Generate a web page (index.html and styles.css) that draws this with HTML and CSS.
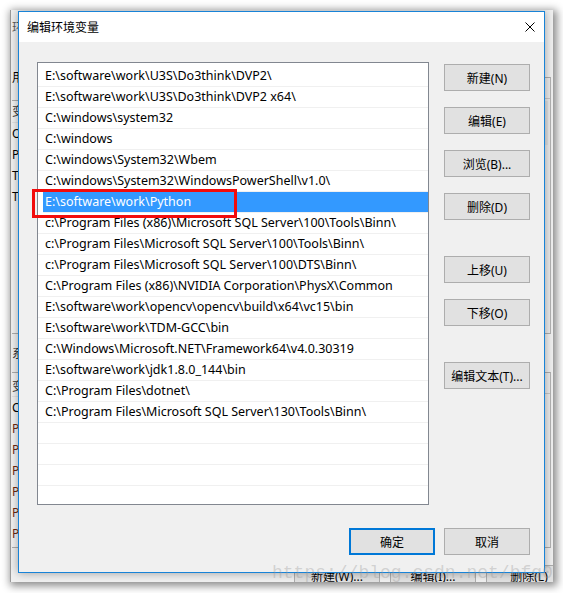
FILE: index.html
```html
<!DOCTYPE html>
<html lang="zh-CN">
<head>
<meta charset="utf-8">
<title>编辑环境变量</title>
<link rel="stylesheet" href="styles.css">
</head>
<body>
<div class="shot">
  <div class="bgwin">
    <div class="bg-main">
      <div class="bg-left">
        <div class="bg-cap">环境变量</div>
        <div class="bg-grp">用户变量(U)</div>
        <div class="bg-list bg-list1">
          <div class="bg-head">变量</div>
          <div class="bg-row">OneDrive</div>
          <div class="bg-row">Path</div>
          <div class="bg-row">TEMP</div>
          <div class="bg-row">TMP</div>
        </div>
        <div class="bg-grp2">系统变量(S)</div>
        <div class="bg-list bg-list2">
          <div class="bg-head">变量</div>
          <div class="bg-row">ComSpec</div>
          <div class="bg-row brown">Path</div>
          <div class="bg-row brown">PATHEXT</div>
          <div class="bg-row brown">PROCESSOR_ARCHITECTURE</div>
          <div class="bg-row brown">PROCESSOR_IDENTIFIER</div>
          <div class="bg-row brown">PROCESSOR_LEVEL</div>
          <div class="bg-row brown">PROCESSOR_REVISION</div>
        </div>
      </div>
      <div class="bg-right">
        <div class="r-list r-list1"><div class="r-head"></div><div class="r-bar"></div></div>
        <div class="r-list r-list2"><div class="r-head"></div></div>
      </div>
    </div>
    <div class="bg-foot">
      <div class="bg-btn">新建(W)...</div>
      <div class="bg-btn">编辑(I)...</div>
      <div class="bg-btn">删除(L)</div>
    </div>
  </div>

  <div class="dlg">
    <div class="titlebar">
      <span class="title">编辑环境变量</span>
      <svg class="close" width="10" height="10" viewBox="0 0 10 10"><path d="M0.5 0.5 L9.5 9.5 M9.5 0.5 L0.5 9.5" stroke="#000" stroke-width="1" fill="none"/></svg>
    </div>
    <div class="dbody">
      <div class="main">
        <div class="list">
          <div class="row">E:\software\work\U3S\Do3think\DVP2\</div>
          <div class="row">E:\software\work\U3S\Do3think\DVP2 x64\</div>
          <div class="row">C:\windows\system32</div>
          <div class="row">C:\windows</div>
          <div class="row">C:\windows\System32\Wbem</div>
          <div class="row">C:\windows\System32\WindowsPowerShell\v1.0\</div>
          <div class="row sel">E:\software\work\Python</div>
          <div class="row">c:\Program Files (x86)\Microsoft SQL Server\100\Tools\Binn\</div>
          <div class="row">c:\Program Files\Microsoft SQL Server\100\Tools\Binn\</div>
          <div class="row">c:\Program Files\Microsoft SQL Server\100\DTS\Binn\</div>
          <div class="row">C:\Program Files (x86)\NVIDIA Corporation\PhysX\Common</div>
          <div class="row">E:\software\work\opencv\opencv\build\x64\vc15\bin</div>
          <div class="row">E:\software\work\TDM-GCC\bin</div>
          <div class="row">C:\Windows\Microsoft.NET\Framework64\v4.0.30319</div>
          <div class="row">E:\software\work\jdk1.8.0_144\bin</div>
          <div class="row">C:\Program Files\dotnet\</div>
          <div class="row">C:\Program Files\Microsoft SQL Server\130\Tools\Binn\</div>
          <div class="row"></div>
          <div class="row"></div>
          <div class="row"></div>
          <div class="row"></div>
          <div class="row"></div>
        </div>
        <div class="btns">
          <div class="btn">新建(N)</div>
          <div class="btn">编辑(E)</div>
          <div class="btn">浏览(B)...</div>
          <div class="btn">删除(D)</div>
          <div class="btn grp">上移(U)</div>
          <div class="btn">下移(O)</div>
          <div class="btn grp">编辑文本(T)...</div>
        </div>
      </div>
      <div class="foot">
        <div class="btn def">确定</div>
        <div class="btn">取消</div>
      </div>
    </div>
    <div class="mark"></div>
  </div>

  <div class="wm">https://blog.csdn.net/bfq0</div>
</div>
</body>
</html>
```

FILE: styles.css
```css
* { box-sizing: border-box; }
html, body { margin: 0; padding: 0; }
body {
  width: 563px;
  height: 593px;
  overflow: hidden;
  background: #fff;
  font-family: "Noto Sans", "Noto Sans CJK SC", sans-serif;
  font-size: 12px;
  color: #000;
}

.shot {
  position: relative;
  margin: 10px 0 0 10px;
  width: 543px;
  height: 572px;
  background: #f0f0f0;
  box-shadow: 2px 2px 8px 2px rgba(0, 0, 0, 0.45);
  overflow: hidden;
}

/* background window */
.bgwin {
  height: 100%;
  display: flex;
  flex-direction: column;
  border-left: 1px solid #9a9a9a;
}
.bg-main {
  flex: 1;
  display: flex;
  justify-content: space-between;
}
.bg-left {
  width: 120px;
  padding-left: 1px;
  display: flex;
  flex-direction: column;
  white-space: nowrap;
}
.bg-cap { height: 34px; line-height: 36px; color: #5a5a5a; }
.bg-grp { margin-top: 24px; height: 20px; line-height: 20px; }
.bg-grp2 { margin-top: 10px; height: 20px; line-height: 20px; color: #333; }
.bg-list {
  border-top: 1px solid #adadad;
  border-bottom: 1px solid #adadad;
  background: #f3f3f3;
}
.bg-list1 { margin-top: 12px; height: 234px; }
.bg-list2 { margin-top: 8px; height: 176px; }
.bg-head { height: 22px; line-height: 22px; color: #333; border-bottom: 1px solid #e3e3e3; }
.bg-list2 .bg-head { height: 24px; line-height: 28px; }
.bg-row { height: 21px; line-height: 21px; }
.bg-row.brown { color: #6a2810; }

.bg-right {
  width: 30px;
  display: flex;
  flex-direction: column;
  padding-right: 2px;
}
.r-list {
  border-top: 1px solid #adadad;
  border-bottom: 1px solid #adadad;
  border-right: 1px solid #b4b4b4;
  background: #ececec;
}
.r-list1 { margin-top: 67px; height: 257px; }
.r-list2 { margin-top: 38px; height: 176px; }
.r-head { height: 21px; border-bottom: 1px solid #c8c8c8; }
.r-bar { margin: 2px 2px 0 auto; width: 5px; height: 44px; background: #e2e2e2; }

.bg-foot {
  height: 17px;
  display: flex;
  gap: 10px;
  padding-left: 283px;
}
.bg-btn {
  flex: 0 0 86px;
  height: 23px;
  border: 1px solid #adadad;
  background: #e1e1e1;
  text-align: center;
  line-height: 21px;
  white-space: nowrap;
}

/* dialog */
.dlg {
  position: absolute;
  left: 8px;
  top: 1px;
  width: 527px;
  height: 562px;
  border: 1px solid #1883d7;
  background: #f0f0f0;
  box-shadow: 0 0 9px rgba(0, 0, 0, 0.35);
  display: flex;
  flex-direction: column;
}
.titlebar {
  height: 30px;
  flex: 0 0 30px;
  background: #fff;
  display: flex;
  align-items: center;
  justify-content: space-between;
  padding: 0 9px 0 8px;
}
.title { font-size: 12px; }
.close { display: block; }

.dbody {
  flex: 1;
  padding: 20px 14px 0 18px;
}
.main {
  display: flex;
  gap: 15px;
}
.list {
  width: 392px;
  height: 443px;
  flex: 0 0 392px;
  background: #fff;
  border: 1px solid #828790;
  padding-top: 3px;
  overflow: hidden;
}
.row {
  height: 21px;
  border-bottom: 1px solid #f0f0f0;
  line-height: 20px;
  padding-left: 7px;
  font-size: 12.5px;
  white-space: nowrap;
}
.row.sel {
  margin-left: 5px;
  padding-left: 2px;
  background: #3399ff;
  color: #fff;
}

.btns {
  width: 86px;
  display: flex;
  flex-direction: column;
  gap: 16px;
  padding-top: 2px;
}
.btn {
  height: 27px;
  border: 1px solid #adadad;
  background: #e1e1e1;
  display: flex;
  align-items: center;
  justify-content: center;
  white-space: nowrap;
}
.btns .grp { margin-top: 20px; }

.foot {
  display: flex;
  justify-content: flex-end;
  gap: 9px;
  margin-top: 23px;
}
.foot .btn { width: 86px; }
.btn.def { border: 2px solid #0078d7; }

.mark {
  position: absolute;
  left: 13px;
  top: 177px;
  width: 205px;
  height: 29px;
  border: 3px solid #f20c0c;
}

.wm {
  position: absolute;
  left: 262px;
  top: 553px;
  font-family: "Liberation Mono", monospace;
  font-size: 18px;
  line-height: 20px;
  color: rgba(150, 150, 150, 0.35);
  white-space: nowrap;
}
```
